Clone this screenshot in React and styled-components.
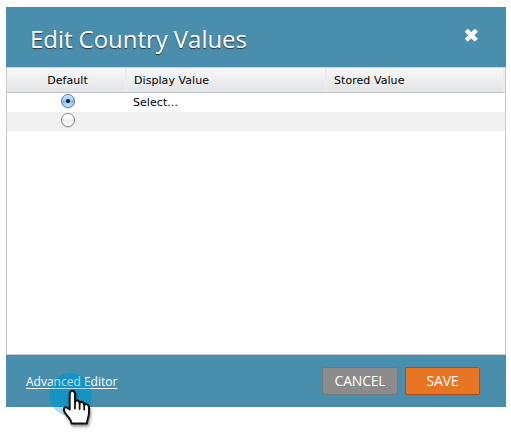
import React from "react";
import styled, { createGlobalStyle } from "styled-components";

const GlobalStyle = createGlobalStyle`
  * { box-sizing: border-box; }
  body { margin: 0; background: #fff; }
`;

const Page = styled.main`
  height: 434px;
  padding: 7px 0 0 6px;
`;

const Dialog = styled.section`
  position: relative;
  display: flex;
  flex-direction: column;
  width: 500px;
  height: 400px;
  background: #fff;
  font-family: "Open Sans", sans-serif;
`;

const Header = styled.header`
  display: flex;
  align-items: center;
  justify-content: space-between;
  height: 60px;
  padding: 0 27px 0 24px;
  background: #4a8eae;
  color: #fff;
`;

const Title = styled.h1`
  margin: 3px 0 0;
  font-size: 24px;
  line-height: 34px;
  font-weight: 400;
  letter-spacing: -0.05px;
  white-space: nowrap;
  text-shadow: 0 1px 1px #333;
`;

const CloseButton = styled.button`
  display: flex;
  width: 15px;
  height: 15px;
  margin-top: -4px;
  padding: 0;
  border: 0;
  background: none;
`;

const Grid = styled.div`
  flex: 1;
  border: 1px solid #c9cacb;
  border-top-color: #d0d0d0;
  font: 11px/19px "DejaVu Sans", sans-serif;
  color: #000;
`;

const Row = styled.div`
  display: grid;
  grid-template-columns: 120px 200px 1fr;
  height: 19px;
  background: ${(p) => (p.$striped ? "#f1f1f1" : "#fff")};
`;

const HeadRow = styled(Row)`
  height: 25px;
  line-height: 23px;
  background: linear-gradient(#f8f8f8, #e3e4e6);
  border-bottom: 1px solid #c0c1c2;
`;

const Cell = styled.div`
  display: flex;
  align-items: center;
  justify-content: ${(p) => (p.$center ? "center" : "flex-start")};
  padding-left: 6px;
  padding-left: ${(p) => (p.$center ? 0 : 6)}px;
  letter-spacing: 0.06px;
  white-space: nowrap;
`;

const HeadCell = styled(Cell)`
  align-items: stretch;
  padding: 1px 0 0 ${(p) => (p.$center ? 3 : 7)}px;
  border-right: 2px solid #ededed;
`;

const Radio = styled.span`
  display: flex;
  align-items: center;
  justify-content: center;
  width: 14px;
  height: 14px;
  margin: -3px 0 0 2px;
  border: 1px solid ${(p) => (p.$checked ? "#656da5" : "#8a8a8a")};
  border-radius: 50%;
  background: ${(p) =>
    p.$checked
      ? "linear-gradient(#d8e8fb 0%, #a5cdf6 40%, #80b9f2 52%, #c9f1ff 100%)"
      : "linear-gradient(#fff 0%, #fafafa 40%, #ececec 55%, #fff 100%)"};
  box-shadow: 0 1px 0 rgba(0, 0, 0, 0.12);
`;

const RadioDot = styled.span`
  width: 4px;
  height: 4px;
  border-radius: 50%;
  background: #071733;
`;

const Footer = styled.footer`
  display: flex;
  align-items: center;
  height: 52px;
  padding: 0 26px 0 20px;
  background: #4a8eae;
`;

const EditorLink = styled.a`
  position: relative;
  z-index: 1;
  margin-right: auto;
  color: #fff;
  font-size: 12px;
  line-height: 17px;
  white-space: nowrap;
  text-decoration: underline;
  text-underline-offset: 2px;
  text-decoration-thickness: 1px;
`;

const Button = styled.button`
  width: ${(p) => (p.$primary ? 75 : 76)}px;
  height: 28px;
  margin-left: 7px;
  padding: 0;
  border: 1px solid ${(p) => (p.$primary ? "#ad4d14" : "#777")};
  border-radius: 2px;
  background: ${(p) => (p.$primary ? "#e87524" : "#8b8b8b")};
  color: #fff;
  font: 14px/24px "Open Sans", sans-serif;
  letter-spacing: -0.2px;
`;

const Halo = styled.span`
  position: absolute;
  z-index: ${(p) => (p.$over ? 2 : 0)};
  left: 43px;
  top: 366px;
  width: 43px;
  height: 43px;
  border-radius: 50%;
  background: ${(p) =>
    p.$over
      ? "rgba(0, 151, 202, 0.33)"
      : "linear-gradient(rgba(0, 151, 202, 0.55) 34px, transparent 34px)"};
`;

const Pointer = styled.svg`
  position: absolute;
  z-index: 3;
  left: 54px;
  top: 380px;
  width: 40px;
  height: 46px;
  filter: drop-shadow(1px 2px 1.5px rgba(0, 0, 0, 0.45));
`;

export default function App() {
  return (
    <Page>
      <GlobalStyle />
      <Dialog>
        <Header>
          <Title>Edit Country Values</Title>
          <CloseButton aria-label="Close">
            <svg width="15" height="15" viewBox="0 0 15 15">
              <path d="M2.3 2.3 12.3 12.3M12.3 2.3 2.3 12.3" stroke="#fff" strokeWidth="4.4" />
            </svg>
          </CloseButton>
        </Header>
        <Grid>
          <HeadRow>
            <HeadCell $center>Default</HeadCell>
            <HeadCell>Display Value</HeadCell>
            <HeadCell>Stored Value</HeadCell>
          </HeadRow>
          <Row>
            <Cell $center><Radio $checked><RadioDot /></Radio></Cell>
            <Cell>Select...</Cell>
          </Row>
          <Row $striped>
            <Cell $center><Radio /></Cell>
          </Row>
        </Grid>
        <Footer>
          <EditorLink>Advanced Editor</EditorLink>
          <Button>CANCEL</Button>
          <Button $primary>SAVE</Button>
        </Footer>
        <Halo />
        <Halo $over />
        <Pointer viewBox="0 0 40 46">
          <path
            d="M9.7 22.5V7.2C9.7 2.5 15 2.5 15 7.2V15C16 12.6 19.4 13 19.6 16C20.8 14 24 14.8 24.2 17.8C26 16 29 17.4 29 21V26C29 29.5 27.3 31.5 27 36.5H11.5C11.5 31.8 6.4 29 4.4 24.6C2.9 21.2 5.4 18.6 7.7 21.2Z"
            fill="#fff" stroke="#111" strokeWidth="2" strokeLinejoin="round"
          />
          <path d="M15 14.5V21.5M19.6 16V22M24.2 18V22.5" fill="none" stroke="#111" strokeWidth="1.8" strokeLinecap="round" />
        </Pointer>
      </Dialog>
    </Page>
  );
}
